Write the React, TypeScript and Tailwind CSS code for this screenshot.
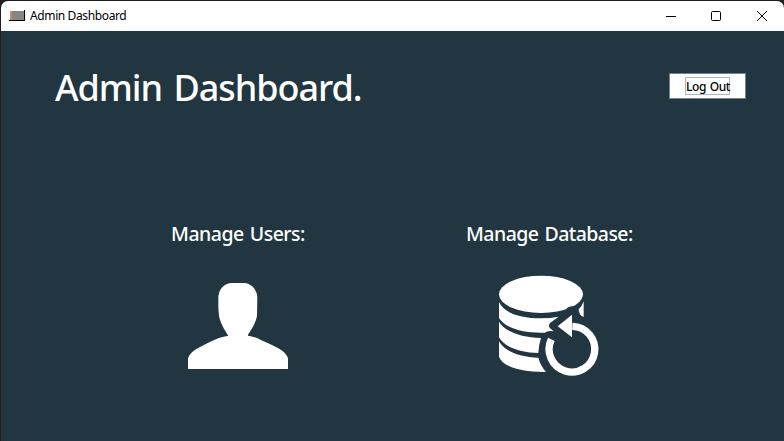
function UserIcon() {
  return (
    <svg viewBox="0 0 360 300" className="block h-[100px] w-[120px]" fill="#fff">
      <path d="M153 24H193C215 26 231 44 232 67L231 122C228 141 215 163 204 179V182Q217 184 231 189C252 200 277 210 299 222Q318 233 324 250V282H24V250Q30 233 49 222C71 210 96 197 117 189Q131 184 145 182C133 164 120 141 117 122L115 98V67C116 44 131 26 153 24Z" />
    </svg>
  );
}

function DatabaseIcon() {
  return (
    <svg viewBox="0 0 360 336" className="block h-[112px] w-[120px]">
      <g fill="#fff">
        <ellipse cx="153" cy="73" rx="126" ry="56" />
        <path d="M27 96C40 126 85 145 153 145Q181 145 206 140L181 158Q173 166 180 175L191 184Q175 180 164 188C94 190 45 173 27 144Z" />
        <path d="M27 155C44 184 90 201 153 204Q146 225 145 249C90 247 42 231 27 202Z" />
        <path d="M27 214C44 245 90 261 145 263Q151 286 168 306C90 307 37 289 27 260Z" />
        <path d="M265 119Q276 110 281 94V141Q272 138 270 133Z" />
      </g>
      <path d="M206 140L234 112Q248 105 264 112L266 122L246 136Z" fill="#213641" />
      <path d="M184 208A68.5 68.5 0 1 0 247 169" fill="none" stroke="#fff" strokeWidth="22" />
      <path d="M203 169L246 134V202Z" fill="#fff" />
    </svg>
  );
}

function TitleBar() {
  return (
    <header className="flex h-[30px] items-center rounded-t-[7px] bg-white pl-2 text-black">
      <svg viewBox="0 0 16 12" className="h-3 w-4" shapeRendering="crispEdges">
        <path d="M1 1H3V10H1Z" fill="#c68a6c" />
        <path d="M3 1H15V10H3Z" fill="#858585" />
        <path d="M0 10H16V11H0ZM15 0H16V11H15Z" fill="#000" />
      </svg>
      <span className="ml-[5px] w-24 whitespace-nowrap text-[12px] leading-4 tracking-[-0.38px]">Admin Dashboard</span>
      <svg viewBox="0 0 110 12" className="ml-auto mr-4 h-3 w-[110px]" fill="none" stroke="#000">
        <path d="M8 6.5H18" />
        <rect x="53.5" y="1.5" width="9" height="9" rx="1" />
        <path d="M99 1L109 11M109 1L99 11" />
      </svg>
    </header>
  );
}

export default function App() {
  return (
    <div className="h-[441px] w-[784px] overflow-hidden bg-[#202020] pl-px pt-px font-['Noto_Sans','Open_Sans',sans-serif]">
      <TitleBar />
      <main className="h-[410px] bg-[#213641] text-white">
        <div className="flex h-[189px] justify-between pl-[54px] pr-[38px]">
          <h1 className="mt-[33px] h-12 whitespace-nowrap text-[36px] font-medium leading-[48px] tracking-[-1.04px] [word-spacing:3px]">Admin Dashboard.</h1>
          <button className="mt-[42px] flex h-[26px] w-[77px] items-center justify-center border border-[#70838f] bg-white text-black">
            <span className="h-[18px] w-[45px] whitespace-nowrap border border-[#a3b8cc] text-[12px] font-medium leading-[18px] tracking-[-0.4px] [word-spacing:1px]">Log Out</span>
          </button>
        </div>
        <div className="flex">
          <section className="ml-[170px] w-[295px]">
            <h2 className="h-[27px] whitespace-nowrap text-[19.5px] font-medium leading-[27px] tracking-[-0.5px] [word-spacing:1.5px]">Manage Users:</h2>
            <div className="ml-[9px] mt-7"><UserIcon /></div>
          </section>
          <section>
            <h2 className="h-[27px] whitespace-nowrap text-[19.5px] font-medium leading-[27px] tracking-[-0.55px] [word-spacing:1.5px]">Manage Database:</h2>
            <div className="ml-6 mt-[23px]"><DatabaseIcon /></div>
          </section>
        </div>
      </main>
    </div>
  );
}
